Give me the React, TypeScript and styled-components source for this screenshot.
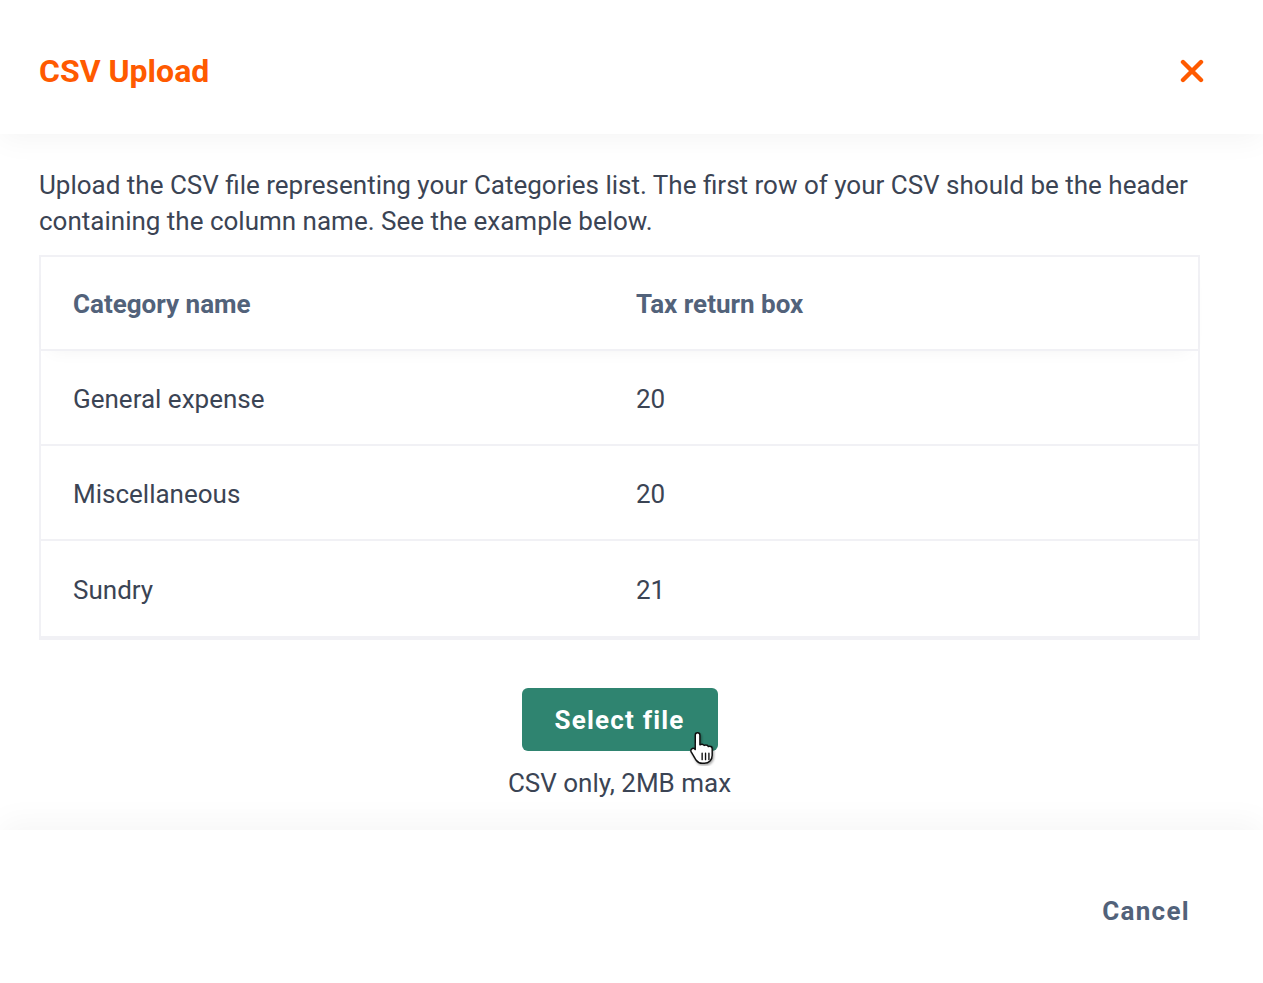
import React from "react";
import styled, { createGlobalStyle } from "styled-components";

const Global = createGlobalStyle`
  html, body { margin: 0; padding: 0; background: #ffffff; }
  body { font-family: Roboto, "Liberation Sans", sans-serif; -webkit-font-smoothing: antialiased; }
  * { box-sizing: border-box; }
`;

const Modal = styled.div`
  width: 1263px;
  height: 983px;
  display: flex;
  flex-direction: column;
  background: #fff;
  overflow: hidden;
`;

const Header = styled.header`
  position: relative;
  z-index: 2;
  height: 134px;
  flex: none;
  display: flex;
  align-items: center;
  justify-content: space-between;
  padding: 8px 56px 0 39px;
  background: #fff;
  box-shadow: 0 6px 28px rgba(0, 0, 0, 0.045);
`;

const Title = styled.h1`
  margin: 0;
  font-size: 32px;
  font-weight: 700;
  color: #ff5a00;
  letter-spacing: 0;
`;

const CloseButton = styled.button`
  border: 0;
  background: none;
  padding: 0;
  width: 30px;
  height: 30px;
  display: flex;
  align-items: center;
  justify-content: center;
  cursor: pointer;
`;

const Body = styled.main`
  flex: 1;
  padding: 33px 63px 0 39px;
  display: flex;
  flex-direction: column;
`;

const Intro = styled.p`
  margin: 0 0 16px;
  font-size: 26px;
  line-height: 36px;
  color: #3b4454;
`;

const Table = styled.div`
  border: 2px solid #f1f1f5;
  border-bottom-width: 4px;
  display: flex;
  flex-direction: column;
`;

const Row = styled.div<{ $head?: boolean; $last?: boolean }>`
  position: relative;
  height: ${(p) => (p.$head ? 94 : 95)}px;
  display: grid;
  grid-template-columns: 563px 1fr;
  align-items: center;
  padding-left: 32px;
  border-bottom: ${(p) => (p.$last ? "0" : "2px solid #f1f1f5")};
  font-size: 26px;
  font-weight: ${(p) => (p.$head ? 700 : 400)};
  color: ${(p) => (p.$head ? "#52627a" : "#3b4454")};
  ${(p) =>
    p.$head
      ? `box-shadow: 0 8px 18px -10px rgba(0,0,0,0.06); z-index: 1;`
      : ""}
`;

const Cell = styled.div`
  padding-top: 2px;
`;

const Upload = styled.div`
  display: flex;
  flex-direction: column;
  align-items: center;
  gap: 17px;
  margin-top: 48px;
`;

const ButtonWrap = styled.div`
  position: relative;
`;

const SelectButton = styled.button`
  width: 196px;
  height: 63px;
  border: 0;
  border-radius: 6px;
  background: #2f8470;
  color: #fff;
  font-family: Roboto, "Liberation Sans", sans-serif;
  font-size: 26px;
  font-weight: 700;
  letter-spacing: 1.2px;
  padding: 0;
  cursor: pointer;
`;

const Cursor = styled.svg`
  position: absolute;
  left: 166px;
  top: 42px;
`;

const Hint = styled.div`
  font-size: 26px;
  line-height: 30px;
  color: #3b4454;
`;

const Footer = styled.footer`
  position: relative;
  height: 153px;
  flex: none;
  display: flex;
  align-items: center;
  justify-content: flex-end;
  padding: 8px 73px 0 0;
  background: #fff;
  box-shadow: 0 -8px 30px rgba(0, 0, 0, 0.04);
`;

const CancelButton = styled.button`
  border: 0;
  background: none;
  font-family: Roboto, "Liberation Sans", sans-serif;
  font-size: 26px;
  font-weight: 700;
  letter-spacing: 1.3px;
  color: #52627a;
  cursor: pointer;
  padding: 0;
`;

const rows = [
  ["General expense", "20"],
  ["Miscellaneous", "20"],
  ["Sundry", "21"],
];

export default function App() {
  return (
    <>
      <Global />
      <Modal>
        <Header>
          <Title>CSV Upload</Title>
          <CloseButton aria-label="Close">
            <svg width="24" height="24" viewBox="0 0 24 24">
              <path
                d="M3 3 L21 21 M21 3 L3 21"
                stroke="#ff5a00"
                strokeWidth="4.4"
                strokeLinecap="round"
              />
            </svg>
          </CloseButton>
        </Header>
        <Body>
          <Intro>
            Upload the CSV file representing your Categories list. The first row of your CSV should be the header
            containing the column name. See the example below.
          </Intro>
          <Table>
            <Row $head>
              <Cell>Category name</Cell>
              <Cell>Tax return box</Cell>
            </Row>
            {rows.map((r, i) => (
              <Row key={r[0]} $last={i === rows.length - 1}>
                <Cell>{r[0]}</Cell>
                <Cell>{r[1]}</Cell>
              </Row>
            ))}
          </Table>
          <Upload>
            <ButtonWrap>
              <SelectButton>Select file</SelectButton>
              <Cursor width="34" height="36" viewBox="0 0 32 34">
                <defs>
                  <filter id="cs" x="-30%" y="-30%" width="160%" height="160%">
                    <feDropShadow dx="1" dy="1.5" stdDeviation="1" floodColor="#000" floodOpacity="0.35" />
                  </filter>
                </defs>
                <path
                  filter="url(#cs)"
                  d="M9 2.5c1.3 0 2.2 1 2.2 2.2v9.3c.5-.4 1.1-.6 1.8-.6 1 0 1.8.5 2.2 1.2.4-.3 1-.5 1.6-.5 1.1 0 2 .6 2.3 1.5.4-.2.8-.3 1.3-.3 1.4 0 2.4 1.1 2.4 2.4v6.1c0 4.3-3 7.700-7.4 7.7h-2c-2.5 0-4.3-1-5.7-2.9L3.1 21c-.8-1.1-.6-2.5.4-3.2 1-.7 2.3-.5 3.1.4l.2.3V4.7C6.8 3.5 7.7 2.5 9 2.5z"
                  fill="#fff"
                  stroke="#111"
                  strokeWidth="1.4"
                  strokeLinejoin="round"
                />
                <path d="M13.3 22v6M16.5 22v6M19.7 22v6" stroke="#111" strokeWidth="1.3" strokeLinecap="round" />
              </Cursor>
            </ButtonWrap>
            <Hint>CSV only, 2MB max</Hint>
          </Upload>
        </Body>
        <Footer>
          <CancelButton>Cancel</CancelButton>
        </Footer>
      </Modal>
    </>
  );
}
